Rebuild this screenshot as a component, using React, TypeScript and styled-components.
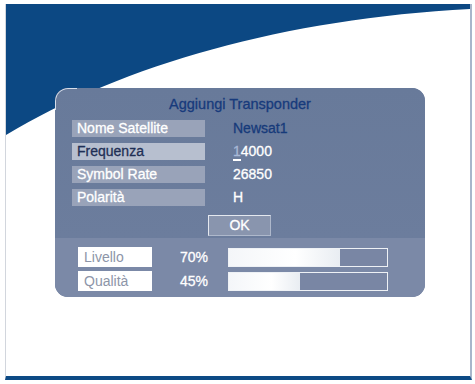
import styled, { createGlobalStyle } from "styled-components";

const GlobalStyle = createGlobalStyle`
  html, body {
    margin: 0;
    padding: 0;
    background: #ffffff;
  }
  body {
    font-family: "Liberation Sans", Arial, sans-serif;
    -webkit-text-stroke: 0.3px currentColor;
  }
`;

const Page = styled.div`
  width: 475px;
  height: 384px;
  box-sizing: border-box;
  padding: 4px 3px 0 5px;
  background: #ffffff;
  overflow: hidden;
`;

const Frame = styled.div`
  position: relative;
  height: 376px;
  box-sizing: border-box;
  border-left: 1px solid #d2d6dd;
  border-right: 2px solid #a9b6cb;
  border-bottom: 4px solid #0d4a85;
  padding: 84px 0 0 49px;
  background: #ffffff;
`;

const Wave = styled.svg`
  position: absolute;
  top: 0;
  left: 0;
  width: 100%;
  height: 140px;
`;

const Panel = styled.div`
  position: relative;
  width: 370px;
  height: 209px;
  border-radius: 13px;
  background: #6b7c9c;
  display: flex;
  flex-direction: column;
  overflow: hidden;

  &::before {
    content: "";
    position: absolute;
    top: 0;
    left: 0;
    width: 22px;
    height: 22px;
    border-top: 1.5px solid rgba(235, 240, 248, 0.85);
    border-left: 1.5px solid rgba(235, 240, 248, 0.85);
    border-top-left-radius: 13px;
    box-sizing: border-box;
  }
`;

const Upper = styled.div`
  display: flex;
  flex-direction: column;
  padding: 6px 0 0 17px;
  height: 150px;
  box-sizing: border-box;
  background: linear-gradient(180deg, #687a9a 0%, #6c7d9d 100%);
`;

const Title = styled.div`
  font-size: 14.5px;
  color: #173a7c;
  text-align: center;
  margin-left: -17px;
  height: 20px;
  line-height: 20px;
  margin-bottom: 6px;
`;

const Row = styled.div`
  display: flex;
  align-items: center;
  height: 17px;
  margin-bottom: 6px;
`;

const Label = styled.div<{ $active?: boolean }>`
  width: 133px;
  height: 17px;
  box-sizing: border-box;
  padding-left: 5px;
  font-size: 14px;
  line-height: 17px;
  color: ${(p) => (p.$active ? "#1f2f55" : "#ffffff")};
  background: ${(p) => (p.$active ? "#b7bfcf" : "#99a3b9")};
`;

const Value = styled.div<{ $dark?: boolean }>`
  margin-left: 28px;
  font-size: 14px;
  line-height: 17px;
  color: ${(p) => (p.$dark ? "#163a7a" : "#ffffff")};
`;

const Cursor = styled.span`
  color: #a8b8d6;
  border-bottom: 2px solid #ffffff;
`;

const ButtonRow = styled.div`
  display: flex;
  padding-left: 136px;
  margin-top: 3px;
`;

const OkButton = styled.div`
  width: 63px;
  height: 21px;
  box-sizing: border-box;
  border: 1.5px solid #e4e8ef;
  border-right-color: #aeb8cb;
  border-bottom-color: #aeb8cb;
  background: #8995ae;
  color: #ffffff;
  font-size: 14px;
  line-height: 18px;
  text-align: center;
`;

const Lower = styled.div`
  flex: 1;
  display: flex;
  flex-direction: column;
  gap: 4px;
  padding: 9px 0 0 23px;
  background: #7b89a7;
`;

const MeterRow = styled.div`
  display: flex;
  align-items: center;
  height: 20px;
`;

const MeterLabel = styled.div`
  width: 74px;
  height: 20px;
  box-sizing: border-box;
  padding-left: 6px;
  background: #ffffff;
  color: #8d95a8;
  font-size: 14px;
  line-height: 20px;
  -webkit-text-stroke: 0;
`;

const Percent = styled.div`
  width: 48px;
  margin-left: 28px;
  color: #ffffff;
  font-size: 14px;
  line-height: 20px;
`;

const Bar = styled.div`
  width: 160px;
  height: 19px;
  box-sizing: border-box;
  border: 1.5px solid #eef1f5;
  background: #7986a4;
  display: flex;
`;

const BarFill = styled.div`
  height: 100%;
  background: linear-gradient(90deg, #f4f6f9 0%, #ffffff 60%, #e9edf2 100%);
`;

const rows = [
  { label: "Nome Satellite", value: "Newsat1", dark: true },
  { label: "Frequenza", value: "4000", active: true, cursor: true },
  { label: "Symbol Rate", value: "26850" },
  { label: "Polarità", value: "H" },
];

const meters = [
  { label: "Livello", value: 70 },
  { label: "Qualità", value: 45 },
];

export default function App() {
  return (
    <>
      <GlobalStyle />
      <Page>
        <Frame>
          <Wave viewBox="0 0 467 140" preserveAspectRatio="none">
            <path d="M0 131 C120 60 280 15 467 5 L467 0 L0 0 Z" fill="#0c4883" />
          </Wave>
          <Panel>
            <Upper>
              <Title>Aggiungi Transponder</Title>
              {rows.map((r) => (
                <Row key={r.label}>
                  <Label $active={r.active}>{r.label}</Label>
                  <Value $dark={r.dark}>
                    {r.cursor && <Cursor>1</Cursor>}
                    {r.value}
                  </Value>
                </Row>
              ))}
              <ButtonRow>
                <OkButton>OK</OkButton>
              </ButtonRow>
            </Upper>
            <Lower>
              {meters.map((m) => (
                <MeterRow key={m.label}>
                  <MeterLabel>{m.label}</MeterLabel>
                  <Percent>{m.value}%</Percent>
                  <Bar>
                    <BarFill style={{ width: `${m.value}%` }} />
                  </Bar>
                </MeterRow>
              ))}
            </Lower>
          </Panel>
        </Frame>
      </Page>
    </>
  );
}
